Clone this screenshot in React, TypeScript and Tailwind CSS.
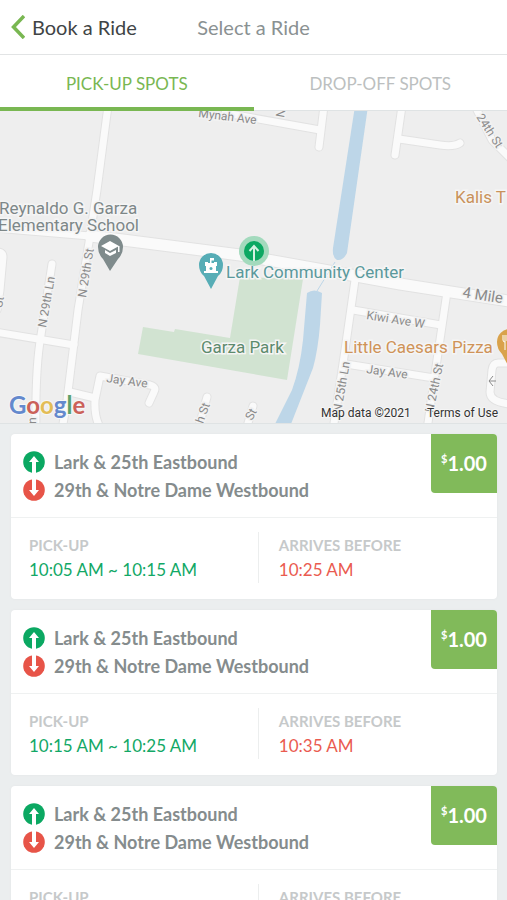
import { useState } from 'react';

type Ride = {
  id: number;
  from: string;
  to: string;
  pickup: string;
  arrival: string;
  price: string;
};

const RIDES: Ride[] = [
  { id: 1, from: 'Lark & 25th Eastbound', to: '29th & Notre Dame Westbound', pickup: '10:05 AM ~ 10:15 AM', arrival: '10:25 AM', price: '1.00' },
  { id: 2, from: 'Lark & 25th Eastbound', to: '29th & Notre Dame Westbound', pickup: '10:15 AM ~ 10:25 AM', arrival: '10:35 AM', price: '1.00' },
  { id: 3, from: 'Lark & 25th Eastbound', to: '29th & Notre Dame Westbound', pickup: '10:25 AM ~ 10:35 AM', arrival: '10:45 AM', price: '1.00' },
];

const TABS = ['PICK-UP SPOTS', 'DROP-OFF SPOTS'];

// Main streets first, then the side streets.
const WIDE_ROADS = ['M90 236 L123 240 L240 255 L340 273 L400 284 L515 302'];
const ROADS = [
  'M-5 228 L90 236',
  'M108 106 L97 190 L90 236 L78 310 L67 400 L62 430',
  'M225 113 L320 130',
  'M324 106 L319 147',
  'M402 106 L395 155',
  'M399 139 L440 145 Q454 147 460 143',
  'M475 106 L492 140 L510 158',
  'M-5 252 Q3 251 3 257 L0 290 L-3 310',
  'M52 264 L41 335 Q35 370 36 430',
  'M-5 332 L74 345',
  'M70 392 L95 398',
  'M102 430 Q94 420 95 400 L100 376 L150 385 Q157 387 154 392 L149 403',
  'M207 397 L198 430',
  'M253 406 L246 430',
  'M355 280 L345 350 L333 430',
  'M447 292 L437 360 L427 430',
  'M353 310 L441 325',
  'M346 364 L434 378',
  'M510 363 L498 363 Q493 363 492 370 L490 392 Q490 402 510 404',
];

function MapView() {
  return (
    <section aria-label="Map" className="border-b border-[#dfe3e4] bg-[#eeeeee]">
      <svg viewBox="0 111 507 312" className="block w-full" fontFamily="Roboto, sans-serif">
        <path d="M240 277 L303 279 L287 380 L138 354 L143 327 L174 332 L175 329 L230 338 Z" fill="#d1e3d1" />
        <g fill="none" strokeLinejoin="round" strokeLinecap="round">
          <g stroke="#e2e2e2">
            {WIDE_ROADS.map((d) => <path key={d} d={d} strokeWidth="13" />)}
            {ROADS.map((d) => <path key={d} d={d} strokeWidth="9" />)}
          </g>
          <g stroke="#fafafa">
            {WIDE_ROADS.map((d) => <path key={d} d={d} strokeWidth="11" />)}
            {ROADS.map((d) => <path key={d} d={d} strokeWidth="7" />)}
          </g>
        </g>
        <path d="M355 106 H368 L347 253 Q343 261 337 260 Q332 257 333 248 Z" fill="#bdd6e8" />
        <path d="M335 262 L317 291" stroke="#bdd6e8" strokeWidth="1" />
        <path d="M307 293 Q314 288 322 293 L320 325 Q318 350 313 368 L291 424 H275 L292 390 Q300 368 303 340 Z" fill="#bdd6e8" />

        <g fontSize="12" fill="#8a8a8a" stroke="#f2f2f2" strokeWidth="3" paintOrder="stroke">
          <text transform="translate(198 117) rotate(7)">Mynah Ave</text>
          <text transform="translate(284 118) rotate(-80)">N</text>
          <text transform="translate(476 117) rotate(57)">24th St</text>
          <text transform="translate(2 308) rotate(-80)">St</text>
          <text transform="translate(36 424) rotate(-88)">n</text>
          <text transform="translate(46 328) rotate(-80)">N 29th Ln</text>
          <text transform="translate(86 298) rotate(-81)">N 29th St</text>
          <text transform="translate(106 382) rotate(8)">Jay Ave</text>
          <text transform="translate(203 424) rotate(-70)">h St</text>
          <text transform="translate(252 421) rotate(-62)">St</text>
          <text transform="translate(366 319) rotate(9)">Kiwi Ave W</text>
          <text transform="translate(366 373) rotate(8)">Jay Ave</text>
          <text transform="translate(341 413) rotate(-80)">N 25th Ln</text>
          <text transform="translate(433 413) rotate(-78)">N 24th St</text>
          <text transform="translate(462 297) rotate(9)" fontSize="15">4 Mile</text>
        </g>

        <g fontSize="17" stroke="#f5f5f5" strokeWidth="3" paintOrder="stroke">
          <g fill="#7d8788">
            <text x="-1" y="214">Reynaldo G. Garza</text>
            <text x="-2" y="231">Elementary School</text>
          </g>
          <text x="226" y="278" fill="#5a999c">Lark Community Center</text>
          <text x="201" y="353" fill="#5d8b6d">Garza Park</text>
          <text x="455" y="203" fill="#c9925c">Kalis T</text>
          <text x="344" y="353" fill="#cf9358">Little Caesars Pizza</text>
        </g>

        {/* school */}
        <g>
          <path d="M110 271 L103 259 Q98 254 98 247 A12.500 12.500 0 0 1 123 247 Q123 254 118 259 Z" fill="#7f8b8c" />
          <path d="M101 246 L110 241 L119 246 L110 251 Z M105 250 V253 L110 256 L116 253 V250 L110 253 Z M118 246 H119.500 V252 H118 Z" fill="#fff" />
        </g>
        {/* community center */}
        <g>
          <path d="M211 289 L204 276 Q199 272 199 265 A12 12 0 0 1 223 265 Q223 272 218 276 Z" fill="#57adb6" />
          <path d="M205 262 H208 V263 H210 V258 H214 V260.500 H211.500 V263 H214 V262 H217 V266 H216 V271 H218 V273 H204 V271 H206 V266 H205 Z" fill="#fff" />
          <circle cx="211" cy="268.500" r="1.500" fill="#57adb6" />
        </g>
        {/* restaurant */}
        <g>
          <path d="M510 369 L502 354 Q497 349 497 342 A13 13 0 0 1 523 342 Z" fill="#d9a24b" />
          <path d="M503 335 V340 Q503 342 505 342 V350 M505 335 V342 M507 335 V341" stroke="#fff" fill="none" />
        </g>
        <path d="M496 381 H489 M493 376 L489 381 L493 386" stroke="#8a8a8a" fill="none" />

        {/* selected stop */}
        <circle cx="254" cy="251" r="15" fill="#a3dabd" />
        <circle cx="254" cy="251" r="10" fill="#0ba862" />
        <path d="M254 261 V247 M249.500 251 L254 246 L258.500 251" stroke="#d4f0e1" strokeWidth="2" fill="none" />

        <g fontFamily="Lato, sans-serif" fontSize="24" fontWeight="700" stroke="#f7f7f7" strokeWidth="2" paintOrder="stroke">
          <text x="9" y="414">
            <tspan fill="#6489cd">G</tspan>
            <tspan fill="#cb6159">o</tspan>
            <tspan fill="#e3bd56">o</tspan>
            <tspan fill="#6489cd">g</tspan>
            <tspan fill="#5aa26c">l</tspan>
            <tspan fill="#cb6159">e</tspan>
          </text>
        </g>
        <g fontSize="12" fill="#333" stroke="#f5f5f5" strokeWidth="2" paintOrder="stroke">
          <text x="321" y="417">Map data ©2021</text>
          <text x="427" y="417">Terms of Use</text>
        </g>
      </svg>
    </section>
  );
}

function PickupIcon() {
  return (
    <svg viewBox="0 0 22 22" className="size-[22px] shrink-0" aria-hidden="true">
      <circle cx="11" cy="11" r="10.800" fill="#0ba862" />
      <path d="M9 22 V11 H6 L11 5 L16 11 H13 V22 Z" fill="#fff" />
    </svg>
  );
}

function DropoffIcon() {
  return (
    <svg viewBox="0 0 22 22" className="size-[22px] shrink-0" aria-hidden="true">
      <circle cx="11" cy="11" r="10.800" fill="#e75448" />
      <path d="M9 0 V11 H6 L11 17 L16 11 H13 V0 Z" fill="#fff" />
    </svg>
  );
}

function RideCard({ ride }: { ride: Ride }) {
  return (
    <li className="overflow-hidden rounded-sm bg-white shadow-[0_0_2px_#dfe3e4]">
      <div className="flex items-start justify-between border-b border-[#eff1f1]">
        <div className="flex flex-col pt-[14px] pb-[13px] pl-3 text-lg leading-7 font-bold text-[#858c8d]">
          <div className="flex items-center gap-[9px]">
            <PickupIcon />
            <span>{ride.from}</span>
          </div>
          <div className="flex items-center gap-[9px]">
            <DropoffIcon />
            <span>{ride.to}</span>
          </div>
        </div>
        <div className="flex h-[59px] w-[66px] shrink-0 items-center justify-center rounded-bl-sm bg-[#81ba5a] pb-0.5 font-bold text-white">
          <span className="mb-2 text-[11px] leading-none">$</span>
          <span className="text-xl leading-none">{ride.price}</span>
        </div>
      </div>
      <dl className="grid grid-cols-[51%_49%] pt-[14px] pb-4">
        <div className="border-r border-[#eceeee] pt-px pl-[18px]">
          <dt className="text-[15px] leading-6 font-bold text-[#c6c9ca]">PICK-UP</dt>
          <dd className="text-[17px] leading-[26px] text-[#12a866]">{ride.pickup}</dd>
        </div>
        <div className="pt-px pl-5">
          <dt className="text-[15px] leading-6 font-bold text-[#c6c9ca]">ARRIVES BEFORE</dt>
          <dd className="text-[17px] leading-[26px] text-[#ea5b50]">{ride.arrival}</dd>
        </div>
      </dl>
    </li>
  );
}

export default function App() {
  const [tab, setTab] = useState(0);

  return (
    <div className="h-screen overflow-hidden bg-[#ebeeef] font-[Lato,sans-serif]">
      <header className="grid h-[55px] grid-cols-[1fr_auto_1fr] items-center border-b border-[#e2e4e5] bg-white px-[11px] text-xl">
        <button type="button" className="flex items-center gap-[7px] text-[#404445]">
          <svg viewBox="0 0 14 24" className="h-6 w-[14px]" aria-hidden="true">
            <path d="M13 1 L2.500 12 L13 23" fill="none" stroke="#79b752" strokeWidth="3.500" />
          </svg>
          Book a Ride
        </button>
        <h1 className="text-[#8a9192]">Select a Ride</h1>
      </header>
      <div role="tablist" className="grid grid-cols-2 bg-white">
        {TABS.map((label, i) => (
          <button
            key={label}
            type="button"
            role="tab"
            aria-selected={tab === i}
            onClick={() => setTab(i)}
            className={
              tab === i
                ? 'h-14 border-b-4 border-[#79b752] pt-1.5 text-[17px] text-[#79b752]'
                : 'h-14 border-b border-[#dfe3e4] pt-[3px] text-[17px] text-[#bcbfc0]'
            }
          >
            {label}
          </button>
        ))}
      </div>
      <MapView />
      <ul className="flex flex-col gap-[11px] py-[10px] pr-[10px] pl-[11px]">
        {RIDES.map((ride) => (
          <RideCard key={ride.id} ride={ride} />
        ))}
      </ul>
    </div>
  );
}
